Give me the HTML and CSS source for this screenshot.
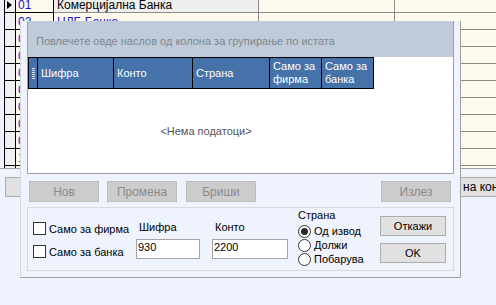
FILE: index.html
```html
<!DOCTYPE html>
<html lang="mk">
<head>
<meta charset="utf-8">
<title>Банки</title>
<link rel="stylesheet" href="styles.css">
</head>
<body>
<div class="app">
  <div class="grid">
    <div class="rows">
      <div class="row">
        <div class="c edge"></div>
        <div class="c ind"><span class="arrow"></span></div>
        <div class="c code">01</div>
        <div class="c name cur">Комерцијална Банка</div>
        <div class="c c3"></div>
        <div class="c c4"></div>
      </div>
      <div class="row">
        <div class="c edge"></div>
        <div class="c ind"></div>
        <div class="c code">02</div>
        <div class="c name blue">НЛБ Банка</div>
        <div class="c c3"></div>
        <div class="c c4"></div>
      </div>
      <div class="row"><div class="c edge"></div><div class="c ind"></div><div class="c code">03</div><div class="c name"></div><div class="c c3"></div><div class="c c4"></div></div>
      <div class="row"><div class="c edge"></div><div class="c ind"></div><div class="c code">04</div><div class="c name"></div><div class="c c3"></div><div class="c c4"></div></div>
      <div class="row"><div class="c edge"></div><div class="c ind"></div><div class="c code">05</div><div class="c name"></div><div class="c c3"></div><div class="c c4"></div></div>
      <div class="row"><div class="c edge"></div><div class="c ind"></div><div class="c code">06</div><div class="c name"></div><div class="c c3"></div><div class="c c4"></div></div>
      <div class="row"><div class="c edge"></div><div class="c ind"></div><div class="c code">07</div><div class="c name"></div><div class="c c3"></div><div class="c c4"></div></div>
      <div class="row"><div class="c edge"></div><div class="c ind"></div><div class="c code">08</div><div class="c name"></div><div class="c c3"></div><div class="c c4"></div></div>
      <div class="row"><div class="c edge"></div><div class="c ind"></div><div class="c code">09</div><div class="c name"></div><div class="c c3"></div><div class="c c4"></div></div>
      <div class="row"><div class="c edge"></div><div class="c ind"></div><div class="c code red">10</div><div class="c name"></div><div class="c c3"></div><div class="c c4"></div></div>
      <div class="row"><div class="c edge"></div><div class="c ind"></div><div class="c code"></div><div class="c name"></div><div class="c c3"></div><div class="c c4"></div></div>
    </div>
  </div>
  <div class="bar">
    <div class="bbtn left"></div>
    <div class="bbtn right">на конто</div>
  </div>

  <div class="dialog">
    <div class="panel">
      <div class="groupby">Повлечете овде наслов од колона за групирање по истата</div>
      <div class="cols">
        <div class="hc gi"><svg width="3" height="11" viewBox="0 0 3 11"><rect x="0" y="0" width="3" height="1" fill="#d9e2ee"/><rect x="0" y="2" width="3" height="1" fill="#d9e2ee"/><rect x="0" y="4" width="3" height="1" fill="#d9e2ee"/><rect x="0" y="6" width="3" height="1" fill="#d9e2ee"/><rect x="0" y="8" width="3" height="1" fill="#d9e2ee"/><rect x="0" y="10" width="3" height="1" fill="#d9e2ee"/></svg></div>
        <div class="hc w-sif">Шифра</div>
        <div class="hc w-kon">Конто</div>
        <div class="hc w-str">Страна</div>
        <div class="hc w-sm">Само за<br>фирма</div>
        <div class="hc w-sm">Само за<br>банка</div>
      </div>
      <div class="body">
        <div class="empty">&lt;Нема податоци&gt;</div>
      </div>
    </div>

    <div class="actions">
      <div class="btn dis b-nov">Нов</div>
      <div class="btn dis b-prom">Промена</div>
      <div class="btn dis b-bri">Бриши</div>
      <div class="btn dis b-izl">Излез</div>
    </div>

    <div class="opts">
      <div class="checks">
        <div class="chk"><span class="box"></span><span>Само за фирма</span></div>
        <div class="chk"><span class="box"></span><span>Само за банка</span></div>
      </div>
      <div class="fld f-sif">
        <div class="lbl">Шифра</div>
        <div class="inp">930</div>
      </div>
      <div class="fld f-kon">
        <div class="lbl">Конто</div>
        <div class="inp">2200</div>
      </div>
      <div class="strana">
        <div class="slbl">Страна</div>
        <div class="rad"><span class="dot on"></span><span>Од извод</span></div>
        <div class="rad"><span class="dot"></span><span>Должи</span></div>
        <div class="rad"><span class="dot"></span><span>Побарува</span></div>
      </div>
      <div class="okc">
        <div class="btn std">Откажи</div>
        <div class="btn std">OK</div>
      </div>
    </div>
  </div>
</div>
</body>
</html>
```

FILE: styles.css
```css
* { box-sizing: border-box; }
html, body { margin: 0; padding: 0; }
body {
  width: 496px;
  height: 305px;
  overflow: hidden;
  background: #eef3fd;
  font-family: "Liberation Sans", Arial, sans-serif;
  font-size: 11px;
  color: #000;
}
.app { position: relative; width: 496px; height: 305px; overflow: hidden; }

/* background grid */
.grid {
  height: 169px;
  overflow: hidden;
  border-bottom: 1px solid #a0a0a0;
  background: #f0f0f0;
}
.rows { margin-top: -4px; }
.row { display: flex; height: 17px; }
.c {
  height: 17px;
  border-bottom: 1px solid #8c8c8c;
  background: #fffaee;
  font-size: 12px;
  line-height: 16px;
  padding-top: 1px;
  white-space: nowrap;
  overflow: hidden;
}
.edge { width: 4px; background: #eef3fd; border-bottom: none; }
.ind {
  width: 12px;
  background: #f0f0f0;
  border-left: 1px solid #000;
  border-right: 1px solid #000;
  border-bottom-color: #000;
  display: flex;
  align-items: center;
  padding: 0 0 0 2px;
}
.arrow {
  width: 0; height: 0;
  border-left: 5px solid #000;
  border-top: 4px solid transparent;
  border-bottom: 4px solid transparent;
  margin-top: 2px;
}
.code {
  width: 38px;
  border-right: 1px solid #000;
  border-bottom-color: #000;
  padding-left: 2px;
  color: #1414d2;
}
.code.red { color: #c03000; }
.name { width: 205px; border-right: 1px solid #8c8c8c; padding-left: 3px; }
.name.cur { background: #efefef; }
.name.blue { color: #1414d2; }
.c3 { width: 136px; border-right: 1px solid #8c8c8c; }
.c4 { flex: 1; }

.bar { display: flex; justify-content: space-between; padding-top: 8px; overflow: hidden; }
.bbtn {
  height: 20px;
  border: 1px solid #adadad;
  background: #e1e1e1;
  font-size: 12px;
  line-height: 18px;
  white-space: nowrap;
  overflow: hidden;
  flex: none;
}
.bbtn.left { width: 60px; margin-left: 5px; }
.bbtn.right { width: 80px; margin-right: -43px; padding-left: 3px; }

/* dialog */
.dialog {
  position: absolute;
  left: 20px;
  top: 21px;
  width: 441px;
  height: 257px;
  background: #eef3fd;
  border-left: 1px solid #d3d8e1;
  border-right: 1px solid #a0a0a0;
  border-bottom: 1px solid #a0a0a0;
  padding: 0 6px;
  display: flex;
  flex-direction: column;
}
.panel {
  height: 153px;
  flex: none;
  border: 1px solid #a0a0a0;
  border-top: none;
  background: #fff;
  display: flex;
  flex-direction: column;
}
.groupby {
  height: 36px;
  flex: none;
  background: #bfcbd8;
  color: #7e878f;
  padding: 3px 0 0 8px;
  display: flex;
  align-items: center;
  white-space: nowrap;
}
.cols { display: flex; height: 32px; flex: none; }
.hc {
  height: 32px;
  background: #4472a9;
  color: #fff;
  border-top: 1px solid #000;
  border-bottom: 1px solid #000;
  border-right: 1px solid #000;
  display: flex;
  align-items: center;
  padding-left: 3px;
  line-height: 13px;
}
.hc.gi { width: 10px; border-left: 1px solid #000; padding: 0; justify-content: center; }
.hc.gi svg { display: block; margin-top: 1px; }
.w-sif { width: 76px; }
.w-kon { width: 79px; }
.w-str { width: 77px; }
.w-sm { width: 52px; }
.body { flex: 1; display: flex; }
.empty {
  width: 356px;
  display: flex;
  align-items: center;
  justify-content: center;
  color: #555;
}

.actions { display: flex; margin-top: 7px; height: 21px; flex: none; }
.btn {
  height: 21px;
  display: flex;
  align-items: center;
  justify-content: center;
  font-size: 12px;
}
.btn.dis {
  width: 70px;
  background: #cccccc;
  border: 1px solid #bdbdbd;
  color: #8b8b8b;
}
.b-nov { margin-left: 2px; }
.b-prom { margin-left: 8px; }
.b-bri { margin-left: 9px; }
.b-izl { margin-left: auto; margin-right: 3px; }

.opts {
  margin-top: 5px;
  height: 64px;
  flex: none;
  border: 1px solid #d5d9e0;
  display: flex;
  align-items: flex-start;
}
.checks { width: 103px; margin-left: 5px; padding-top: 14px; }
.chk { display: flex; align-items: center; height: 13px; margin-bottom: 10px; white-space: nowrap; }
.box { width: 13px; height: 13px; border: 1px solid #333; background: #fff; margin-right: 3px; flex: none; }
.fld { display: flex; flex-direction: column; }
.f-sif { width: 64px; margin-right: 12px; }
.f-kon { width: 76px; margin-right: 10px; }
.lbl { padding: 12px 0 0 3px; line-height: 14px; }
.inp {
  margin-top: 5px;
  height: 20px;
  border: 1px solid #a5a5a5;
  background: #fff;
  padding: 0 1px;
  line-height: 14px;
}
.strana { width: 82px; }
.slbl { line-height: 14px; margin-bottom: 2px; }
.rad { display: flex; align-items: center; height: 14px; white-space: nowrap; }
.dot {
  width: 13px; height: 13px;
  border: 1px solid #333;
  border-radius: 50%;
  background: #fff;
  margin-right: 3px;
  flex: none;
  display: flex;
  align-items: center;
  justify-content: center;
}
.dot.on::after {
  content: "";
  width: 7px; height: 7px;
  border-radius: 50%;
  background: #2a2a2a;
}
.okc { width: 66px; padding-top: 8px; display: flex; flex-direction: column; gap: 7px; }
.btn.std {
  width: 66px;
  height: 20px;
  background: #e1e1e1;
  border: 1px solid #adadad;
  font-size: 11px;
}
```
